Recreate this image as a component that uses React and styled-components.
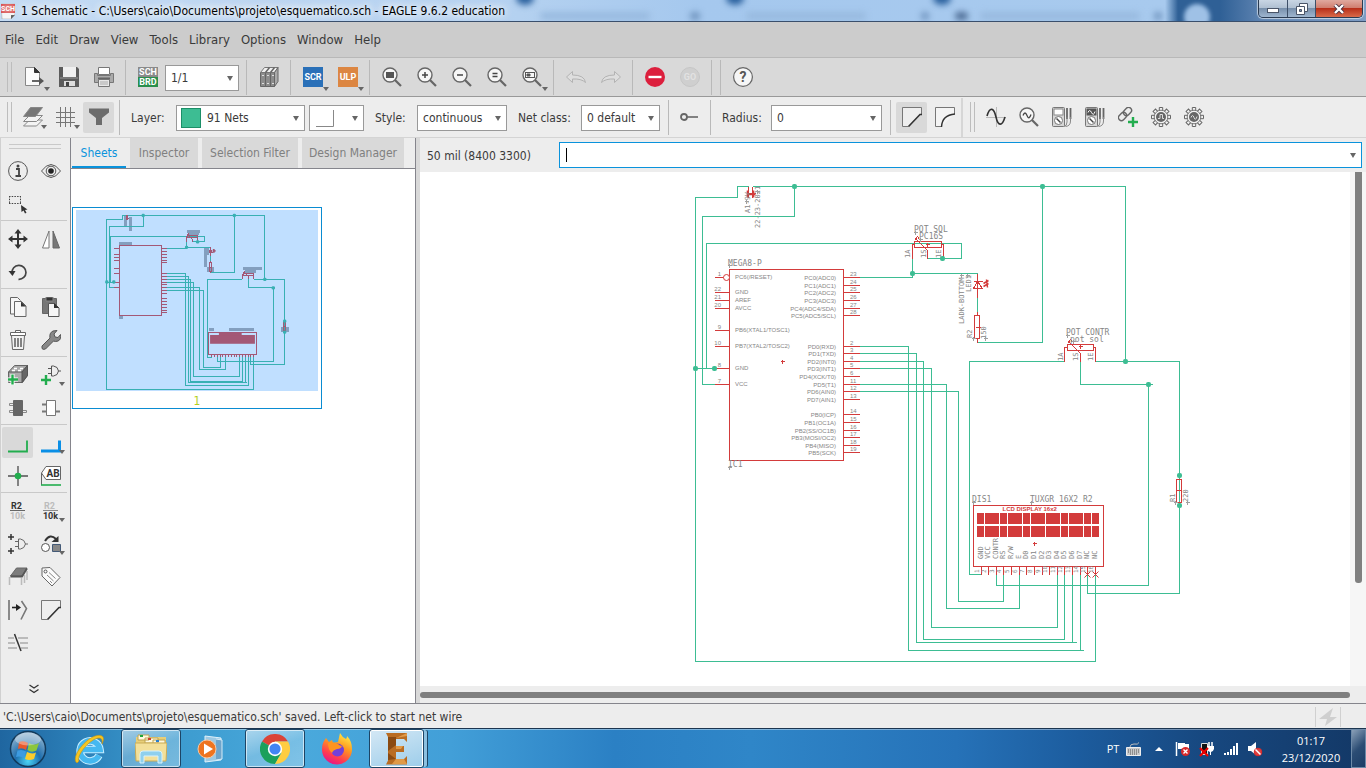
import React from "react";
import styled, { createGlobalStyle, css } from "styled-components";

const UI_FONT = '"DejaVu Sans Condensed", "DejaVu Sans", sans-serif';
const SHELL_FONT = '"Open Sans", "Noto Sans", sans-serif';

const GlobalStyle = createGlobalStyle`
  *, *::before, *::after { box-sizing: border-box; }
  html, body, #root { height: 100%; }
  body { margin: 0; overflow: hidden; }
  button, select, input { font: inherit; color: inherit; margin: 0; }
`;

/* ---------- window frame ---------- */

const Window = styled.div`
  display: flex;
  flex-direction: column;
  height: 100%;
  background: #ededed;
  color: #3a3a3a;
  font: 12px/16px ${UI_FONT};
`;

const TitleBar = styled.header`
  position: relative;
  flex: none;
  display: flex;
  justify-content: space-between;
  height: 22px;
  overflow: hidden;
  border-bottom: 1px solid #3a4f6c;
  background: linear-gradient(90deg, #c4dbf3 0, #b4d1f0 520px, #a5c8ee 700px, #a8caee 1165px, #2f6096 1178px, #2f6096 1220px, #5c82b0 1260px, #7d9cc4 100%);
`;

const GlassTab = styled.span`
  position: absolute;
  top: -9px;
  left: ${(p) => p.$x}px;
  width: 18px;
  height: 14px;
  border-radius: 50%;
  background: #2b619e;
  filter: blur(3px);
`;

const GlassSmudge = styled.span`
  position: absolute;
  top: 12px;
  left: ${(p) => p.$x}px;
  width: ${(p) => p.$w}px;
  height: 8px;
  border-radius: 4px;
  background: ${(p) => p.$tone};
  filter: blur(3px);
`;

const GlassCircle = styled.span`
  position: absolute;
  top: 4px;
  left: 1184px;
  width: 26px;
  height: 26px;
  border-radius: 50%;
  background: #9fc1e6;
  filter: blur(2px);
`;

const Title = styled.h1`
  position: relative;
  display: flex;
  align-items: center;
  gap: 6px;
  margin: 0;
  padding-left: 1px;
  color: #000;
  font: 12px/20px ${UI_FONT};
  white-space: nowrap;
  text-shadow: 0 0 6px #fff, 0 0 10px #fff, 0 0 12px #fff;
`;

const WindowButtons = styled.div`
  position: relative;
  display: flex;
  height: 18px;
  margin-right: 3px;
  border: 1px solid #2a3b52;
  border-top: 0;
  border-radius: 0 0 5px 5px;
  overflow: hidden;
  box-shadow: 0 0 1px 1px rgba(255, 255, 255, 0.6);
`;

const WindowButton = styled.button`
  display: flex;
  align-items: center;
  justify-content: center;
  width: ${(p) => (p.$close ? 47 : 28)}px;
  padding: 0;
  border: 0;
  border-left: ${(p) => (p.$first ? "0" : "1px solid #3d4f68")};
  background: ${(p) =>
    p.$close
      ? "linear-gradient(#e0a99f 0, #d07f70 45%, #b8301a 50%, #d96a4a 100%)"
      : "linear-gradient(#c9d6e4 0, #b0c0d2 45%, #7890ac 50%, #9fb6cf 100%)"};
`;

const MenuBar = styled.nav`
  flex: none;
  display: flex;
  align-items: center;
  gap: 11px;
  height: 36px;
  padding-left: 5px;
  background: #cccccc;
  border-bottom: 1px solid #b8b8b8;
`;

const MenuItem = styled.button`
  padding: 0;
  border: 0;
  background: none;
  font-size: 13px;
  line-height: 20px;
`;

/* ---------- toolbars ---------- */

const MainBar = styled.div`
  flex: none;
  display: flex;
  align-items: center;
  height: 39px;
  padding-left: 7px;
  background: #d9d9d9;
  border-bottom: 1px solid #999;
`;

const OptionBar = styled.div`
  flex: none;
  display: flex;
  align-items: center;
  height: 41px;
  padding-left: 7px;
  background: #ededed;
  border-bottom: 1px solid #d4d4d4;
`;

const Grip = styled.span`
  flex: none;
  width: 5px;
  height: 30px;
  margin-right: 4px;
  border: 1px solid #bdbdbd;
  border-width: 0 1px;
`;

const Separator = styled.span`
  flex: none;
  width: 1px;
  height: 35px;
  margin: 0 4px;
  background: #b9b9b9;
`;

const SectionEnd = styled.span`
  flex: none;
  width: 2px;
  height: 39px;
  margin-right: 7px;
  background: #d6d6d6;
`;

const Tool = styled.button`
  position: relative;
  flex: none;
  display: flex;
  align-items: center;
  justify-content: center;
  width: 35px;
  height: 35px;
  padding: 0;
  border: 0;
  border-radius: 2px;
  background: none;
  ${(p) =>
    p.$small &&
    css`
      width: 31px;
      height: 31px;
      margin: 0 1px;
    `}
  ${(p) => p.$active && "background: #d9d9d9;"}
`;

const DropMark = styled.span`
  position: absolute;
  right: 1px;
  bottom: 4px;
  border: 3px solid transparent;
  border-top: 4px solid #666;
  border-bottom: 0;
`;

const Label = styled.label`
  flex: none;
  width: ${(p) => p.$w}px;
  padding: 2px 0 0 7px;
  white-space: nowrap;
`;

const SelectBox = styled.span`
  position: relative;
  flex: none;
  display: flex;
  align-items: center;
  width: ${(p) => p.$w}px;
  height: 26px;
  margin: 2px ${(p) => p.$after || 4}px 0 0;
  border: 1px solid #999;
  background: #fff;
`;

const Select = styled.select`
  appearance: none;
  width: 100%;
  height: 24px;
  padding: 0 18px 0 ${(p) => p.$pad || 5}px;
  border: 0;
  border-radius: 0;
  outline: 0;
  background: none;
`;

const SelectArrow = styled.span`
  position: absolute;
  right: 5px;
  top: 10px;
  border: 3px solid transparent;
  border-top: 5px solid #666;
  border-bottom: 0;
  pointer-events: none;
`;

const Swatch = styled.span`
  position: absolute;
  left: 4px;
  top: 2px;
  width: 20px;
  height: 20px;
  border: 1px solid #1c8f68;
  background: #3dbd93;
  pointer-events: none;
`;

const BendSample = styled.svg`
  position: absolute;
  left: 6px;
  top: 3px;
  pointer-events: none;
`;

/* ---------- workspace ---------- */

const Workspace = styled.main`
  flex: 1;
  display: flex;
  min-height: 0;
  border-bottom: 1px solid #85858c;
`;

const Palette = styled.aside`
  flex: none;
  display: flex;
  flex-direction: column;
  width: 71px;
  padding: 6px 3px 5px 0;
  border-left: 1px solid #d0d0d0;
  border-right: 1px solid #85858c;
`;

const PaletteGrip = styled.span`
  flex: none;
  height: 5px;
  margin: 0 6px 5px 8px;
  border: 1px solid #c9c9c9;
  border-width: 1px 0;
`;

const PaletteGroup = styled.div`
  display: grid;
  grid-template-columns: 33px 33px;
  grid-auto-rows: 33px;
  align-items: center;
  border-bottom: ${(p) => (p.$last ? "0" : "1px solid #c9c9c9")};
  margin-bottom: 1px;
`;

const More = styled.button`
  align-self: center;
  display: flex;
  margin-top: auto;
  padding: 4px;
  border: 0;
  background: none;
`;

const SheetPanel = styled.section`
  flex: none;
  display: flex;
  flex-direction: column;
  width: 345px;
  border-right: 1px solid #85858c;
  background: #fff;
`;

const TabStrip = styled.div`
  flex: none;
  display: flex;
  gap: 4px;
  height: 31px;
  background: #ededed;
  border-bottom: 1px solid #85858c;
  padding: 0 0 0 1px;
`;

const Tab = styled.button`
  width: ${(p) => p.$w}px;
  height: 30px;
  padding: 2px 0 0;
  border: 0;
  border-bottom: 2px solid ${(p) => (p.$active ? "#0a93dc" : "#d9d9d9")};
  background: ${(p) => (p.$active ? "#ededed" : "#d9d9d9")};
  color: ${(p) => (p.$active ? "#0a93dc" : "#808080")};
  white-space: nowrap;
`;

const SheetCard = styled.figure`
  width: 250px;
  margin: 38px 0 0 1px;
  padding: 2px 3px 0;
  border: 1px solid #0a8cd2;
  text-align: center;
`;

const SheetPreview = styled.svg`
  display: block;
  width: 242px;
  height: 181px;
  background: #c0dfff;
`;

const SheetNumber = styled.figcaption`
  height: 17px;
  padding-top: 2px;
  color: #b4cf1e;
  font-size: 12px;
`;

const Splitter = styled.span`
  flex: none;
  width: 4px;
  background: #d9d9d9;
`;

const Editor = styled.section`
  flex: 1;
  display: flex;
  flex-direction: column;
  min-width: 0;
`;

const CommandRow = styled.div`
  flex: none;
  display: flex;
  align-items: center;
  height: 34px;
  padding: 0 4px 0 7px;
`;

const Coordinates = styled.label`
  flex: none;
  width: 132px;
  padding-top: 2px;
  white-space: nowrap;
`;

const CommandBox = styled.span`
  position: relative;
  flex: 1;
  display: flex;
  height: 26px;
  border: 1px solid #0a93dc;
  background: #fff;
`;

const CommandInput = styled.input`
  width: 100%;
  padding: 0 20px 0 6px;
  border: 0;
  outline: 0;
  background: none;
`;

const Caret = styled.span`
  position: absolute;
  left: 6px;
  top: 5px;
  width: 1px;
  height: 14px;
  background: #000;
`;

const CanvasRow = styled.div`
  flex: 1;
  display: flex;
  min-height: 0;
`;

const Canvas = styled.div`
  flex: 1;
  min-width: 0;
  overflow: hidden;
  background: #fff;
`;

const Drawing = styled.svg`
  display: block;
`;

const VerticalTrack = styled.div`
  flex: none;
  width: 16px;
  padding-left: 5px;
  background: #f6f6f6;
`;

const VerticalThumb = styled.div`
  width: 7px;
  height: 80%;
  border-radius: 0 0 3px 3px;
  background: #808080;
`;

const HorizontalTrack = styled.div`
  flex: none;
  height: 17px;
  padding: 6px 16px 0 0;
`;

const HorizontalThumb = styled.div`
  height: 6px;
  border-radius: 3px;
  background: #808080;
`;

const StatusBar = styled.footer`
  flex: none;
  display: flex;
  align-items: center;
  justify-content: space-between;
  height: 24px;
  padding: 2px 25px 0 3px;
`;

const StatusFlash = styled.span`
  display: flex;
  align-items: center;
  padding: 0 2px;
  border: 1px solid #d0d0d0;
  border-width: 0 1px;
`;

/* ---------- taskbar ---------- */

const Taskbar = styled.div`
  flex: none;
  display: flex;
  justify-content: space-between;
  height: 40px;
  border-top: 1px solid #1c3550;
  box-shadow: inset 0 1px 0 rgba(255, 255, 255, 0.4);
  background: linear-gradient(90deg, #1f66a0 0, #2a7cb5 5%, #3b9ace 12%, #4aa9dc 22%, #429fd8 33%, #2b80c4 45%, #2f86c8 55%, #2672b8 70%, #1c5c9e 79%, #174880 88%, #133866 100%);
`;

const Apps = styled.div`
  display: flex;
  align-items: center;
  padding-left: 7px;
`;

const AppButton = styled.button`
  display: flex;
  align-items: center;
  justify-content: center;
  width: ${(p) => p.$w}px;
  height: 39px;
  margin-right: ${(p) => p.$after || 0}px;
  padding: 0;
  border: 1px solid transparent;
  border-radius: 3px;
  background: none;
  ${(p) =>
    p.$open &&
    css`
      border-color: #1d4566;
      box-shadow: inset 0 0 0 1px rgba(255, 255, 255, 0.6);
      background: linear-gradient(160deg, rgba(255, 255, 255, 0.55), rgba(255, 255, 255, 0.25) 50%, rgba(255, 255, 255, 0.3));
    `}
  ${(p) =>
    p.$stacked &&
    css`
      background: linear-gradient(160deg, #d4e8f5, #9dcdea);
      box-shadow: inset 0 0 0 1px #fff, 4px 0 0 -1px #8cc0e0, 5px 0 0 -1px #1d4566;
    `}
`;

const Tray = styled.div`
  display: flex;
  align-items: center;
  color: #fff;
  font: 11px/17px ${SHELL_FONT};
`;

const TrayItem = styled.span`
  display: flex;
  justify-content: center;
  width: ${(p) => p.$w || 24}px;
`;

const Clock = styled.time`
  width: 80px;
  margin-left: 4px;
  text-align: center;
`;

const ShowDesktop = styled.button`
  width: 15px;
  height: 39px;
  padding: 0;
  border: 1px solid #6d8aa8;
  background: linear-gradient(135deg, #8aa0b8, #2c4d74 50%, #1b3c66);
`;

/* ---------- icons ---------- */

const Icon = ({ children, size = 20 }) => (
  <svg width={size} height={size} viewBox={`0 0 ${size} ${size}`} fill="none" stroke="#555" strokeWidth="1" aria-hidden="true">
    {children}
  </svg>
);

const Lens = ({ children }) => (
  <>
    <path d="M13 13l6 6" strokeWidth="2.2" stroke="#666" />
    <circle cx="8" cy="8" r="7" fill="#f6f6f6" stroke="#666" strokeWidth="1.4" />
    {children}
  </>
);

const Meter = ({ dark }) => (
  <>
    <rect x=".5" y=".5" width="12" height="19" rx="1" fill="#d6d6d6" stroke="#777" />
    <rect x="2" y="2" width="9" height="6" fill={dark ? "#555" : "#fff"} stroke={dark ? "#555" : "#888"} />
    {dark && <path d="M3 5.500q1.500-4 3.500 0t3.500-1" stroke="#fff" />}
    <circle cx="6.500" cy="13.500" r="4" fill="#fff" stroke="#777" />
    <path d="M4.500 11.500l4 4" stroke="#444" strokeWidth="1.400" />
    <path d="M15 1v11M18.500 1v11" strokeWidth="1.800" stroke="#666" />
    <path d="M15 10v5q0 4-3 4.500M18.500 10v4q0 5-5 5.500" stroke="#888" />
  </>
);

const GEAR_TEETH = [0, 45, 90, 135, 180, 225, 270, 315];

const Gear = ({ children }) => (
  <>
    {GEAR_TEETH.map((a) => (
      <path key={a} d="M8.300 4V.500h3.400V4" transform={`rotate(${a} 10 10)`} fill="#f2f2f2" stroke="#666" />
    ))}
    <circle cx="10" cy="10" r="6.800" fill="#f2f2f2" stroke="#777" />
    <circle cx="10" cy="10" r="5" fill="#666" stroke="none" />
    {children}
  </>
);

const BadgeText = (props) => (
  <text fontFamily="Roboto, sans-serif" fontWeight="700" fontSize="9" textAnchor="middle" stroke="none" {...props} />
);

const GLYPHS = {
  open: (
    <>
      <path d="M1.500.500h9l5 5v13h-14z" fill="#fbfbfb" stroke="#888" />
      <path d="M10.500.500v5h5z" fill="#333" stroke="#333" />
      <path d="M8 14h9" stroke="#555" strokeWidth="1.800" />
      <path d="M15 10l5 4-5 4z" fill="#555" stroke="none" />
    </>
  ),
  save: (
    <>
      <path d="M0 0h18l2 2v18H0z" fill="#5c5c5c" stroke="none" />
      <path d="M4 0h13v10H4z" fill="#f0f0f0" stroke="none" />
      <path d="M1 11h18" stroke="#999" />
      <path d="M5 14h11v5H5z" fill="#ddd" stroke="none" />
      <path d="M7 15h3v4H7z" fill="#444" stroke="none" />
    </>
  ),
  print: (
    <>
      <path d="M4.500.500h11v7h-11z" fill="#fff" stroke="#777" />
      <path d="M.500 6.500h3v2h13v-2h3v9H.500z" fill="#aaa" stroke="#777" />
      <path d="M4 11.500h12" stroke="#666" strokeWidth="2" />
      <path d="M4.500 12.500h11v7h-11z" fill="#e8e8e8" stroke="#777" />
      <path d="M6 15h8M6 17h8" stroke="#aaa" />
    </>
  ),
  schbrd: (
    <>
      <rect width="20" height="10" fill="#8a8a8a" stroke="none" />
      <rect y="10" width="20" height="10" fill="#2a8f4c" stroke="none" />
      <BadgeText x="10" y="8" fill="#fff">SCH</BadgeText>
      <BadgeText x="10" y="18" fill="#fff">BRD</BadgeText>
    </>
  ),
  books: (
    <>
      <path d="M1.500 5.500h5v14h-5zM6.500 5.500h5v14h-5zM11.500 5.500h4v14h-4z" fill="#8c8c8c" stroke="#666" />
      <path d="M1.500 5.500l4-5h13.500l-3.500 5z" fill="#f0f0f0" stroke="#777" />
      <path d="M6.500 5.500l4-5M11.500 5.500l4-5" stroke="#666" strokeWidth="1.500" />
      <path d="M15.500 5.500l3.500-5v14l-3.500 5z" fill="#aaa" stroke="#666" />
      <path d="M3 8.500h2M8 8.500h2M13 8.500h2M3 16.500h2M8 16.500h2M13 16.500h2" stroke="#ddd" />
    </>
  ),
  scr: (
    <>
      <rect width="20" height="20" fill="#2a70b8" stroke="none" />
      <BadgeText x="10" y="13">SCR</BadgeText>
    </>
  ),
  ulp: (
    <>
      <rect width="20" height="20" fill="#dc8642" stroke="none" />
      <BadgeText x="10" y="13">ULP</BadgeText>
    </>
  ),
  fit: <Lens><path d="M4 5h8v6H4z" fill="#555" stroke="none" /></Lens>,
  zoomin: <Lens><path d="M5 8h6M8 5v6" stroke="#444" strokeWidth="1.500" /></Lens>,
  zoomout: <Lens><path d="M5 8h6" stroke="#444" strokeWidth="1.500" /></Lens>,
  redraw: <Lens><path d="M5.500 6.500h5M5.500 9.500h5" stroke="#444" strokeWidth="1.300" /></Lens>,
  zoomsel: (
    <Lens>
      <rect x="3.500" y="5.500" width="9" height="5" stroke="#555" />
      <path d="M5 7h3v2H5z" fill="#555" stroke="#555" />
    </Lens>
  ),
  undo: <path d="M.500 10l6-5.500v3.500q12 0 13 7.500-4-4-13-3.500v3.500z" fill="#dedede" stroke="#b3b3b3" />,
  redo: <path d="M19.500 10l-6-5.500v3.500q-12 0-13 7.500 4-4 13-3.500v3.500z" fill="#dedede" stroke="#b3b3b3" />,
  stop: (
    <>
      <circle cx="10" cy="10" r="10" fill="#dc1f3d" stroke="none" />
      <path d="M3.500 10h13" stroke="#fff" strokeWidth="2.400" />
    </>
  ),
  go: (
    <>
      <circle cx="10" cy="10" r="9.500" fill="#cfcfcf" stroke="#c6c6c6" />
      <BadgeText x="10" y="13" fill="#e2e2e2">GO</BadgeText>
    </>
  ),
  help: (
    <>
      <circle cx="10" cy="10" r="9.400" fill="#f6f6f6" stroke="#666" strokeWidth="1.200" />
      <BadgeText x="10" y="15" fill="#555" fontSize="14">?</BadgeText>
    </>
  ),
  layers: (
    <>
      <path d="M.500 19l6-6h13l-6 6z" fill="#f4f4f4" stroke="#888" />
      <path d="M.500 14.500l6-6h13l-6 6z" fill="#f4f4f4" stroke="#888" />
      <path d="M.500 9.500l7-9h12l-7 9z" fill="#777" stroke="#888" />
    </>
  ),
  grid: <path d="M0 5.500h19M0 10.500h19M0 15.500h19M4.500 0v20M9.500 0v20M14.500 0v20" stroke="#777" />,
  filter: <path d="M0 1.500h20v4l-7 5.500v7h-6v-7L0 5.500z" fill="#6c6c6c" stroke="none" />,
  pin: (
    <>
      <circle cx="4" cy="10" r="3" stroke="#666" strokeWidth="1.800" />
      <path d="M7 10h11" stroke="#666" strokeWidth="1.600" />
    </>
  ),
  miter: (
    <>
      <path d="M19.500 7V.500H.500v19h6" stroke="#777" fill="#eee" />
      <path d="M6 20L14 11L16 7.500H20" stroke="none" />
      <path d="M6.500 19.500L18 7.500h2" stroke="#333" strokeWidth="1.600" />
    </>
  ),
  arc: (
    <>
      <path d="M19.500 7V.500H.500v19h6" stroke="#777" fill="#f4f4f4" />
      <path d="M6.500 20Q7 8 20 7" stroke="#333" strokeWidth="1.400" />
    </>
  ),
  sine: (
    <>
      <path d="M0 10.500h20M10.500 0v20" stroke="#bbb" />
      <path d="M1 9C4-1 8 1 10 10s6 10 9 0" stroke="#333" strokeWidth="1.600" />
    </>
  ),
  probe: <Lens><path d="M4 8.500q2-5 4 0t4-1" stroke="#444" strokeWidth="1.300" /></Lens>,
  meter: <Meter />,
  scope: <Meter dark />,
  link: (
    <>
      <g transform="rotate(-45 7 7)" stroke="#666" strokeWidth="1.400">
        <rect x="-1" y="4" width="9" height="6" rx="3" />
        <rect x="6" y="4" width="9" height="6" rx="3" />
      </g>
      <path d="M15 10v10M10 15h10" stroke="#22ad4e" strokeWidth="2.400" />
    </>
  ),
  gearstep: <Gear><path d="M7 11.500h2v-4h2.500v4H13" stroke="#ddd" /></Gear>,
  gearwave: <Gear><path d="M7 10.500q1.500-4 3 0t3-1" stroke="#ddd" /></Gear>,
  info: (
    <>
      <circle cx="10" cy="10" r="9.400" stroke="#555" />
      <path d="M8 8h3v7M7.500 15h5.500" stroke="#444" strokeWidth="1.800" />
      <circle cx="10" cy="5" r="1.500" fill="#444" stroke="none" />
    </>
  ),
  eye: (
    <>
      <path d="M.500 10Q10-3 19.500 10 10 23 .500 10z" stroke="#555" />
      <circle cx="10" cy="10" r="4.800" stroke="#555" />
      <circle cx="10" cy="10" r="2.800" fill="#222" stroke="none" />
    </>
  ),
  group: (
    <>
      <path d="M1 2.500h12M1 9.500h12M1.500 2v8M12.500 2v8" stroke="#444" strokeDasharray="1.500 1.200" />
      <path d="M13 11l.500 7 2-1.500 1.500 3 1.500-.700-1.500-2.800 2.500-.500z" fill="#333" stroke="none" />
    </>
  ),
  move: (
    <>
      <path d="M10 3v14M3 10h14" stroke="#333" strokeWidth="2" />
      <path d="M10 0l3.500 4.500h-7zM10 20l3.500-4.500h-7zM0 10l4.500-3.500v7zM20 10l-4.500-3.500v7z" fill="#333" stroke="none" />
    </>
  ),
  mirror: (
    <>
      <path d="M8 2v17H1.500z" fill="#fff" stroke="#777" />
      <path d="M12 2v17h6.500z" fill="#777" stroke="#666" />
    </>
  ),
  rotate: (
    <>
      <path d="M4 11a7 7 0 1 1 6.500 6.300" stroke="#444" strokeWidth="1.700" />
      <path d="M.500 9h7l-3 5z" fill="#333" stroke="none" />
    </>
  ),
  copy: (
    <>
      <path d="M10.500 17H2.500V.500h7l3 3" fill="#f6f6f6" stroke="#666" />
      <path d="M6.500 4.500h7l4.500 4.500v10.500H6.500z" fill="#f6f6f6" stroke="#666" />
      <path d="M13 4.500v5h5z" fill="#333" stroke="none" />
    </>
  ),
  paste: (
    <>
      <path d="M1.500 1.500h14v15h-14z" fill="#777" stroke="#666" />
      <path d="M5 0h7v4H5z" fill="#333" stroke="#888" />
      <path d="M7.500 6.500h6l4.500 4.500v8.500H7.500z" fill="#f6f6f6" stroke="#555" />
      <path d="M13 6v5h5z" fill="#333" stroke="none" />
    </>
  ),
  trash: (
    <>
      <path d="M3.500 5.500h13l-1 14h-11z" fill="#f2f2f2" stroke="#666" />
      <path d="M2.500 2.500h15v3h-15zM7.500 2.500v-2h5v2" fill="#fff" stroke="#666" />
      <path d="M7 8v9M10 8v9M13 8v9" stroke="#666" strokeWidth="1.600" />
    </>
  ),
  wrench: (
    <path d="M1 16l8-8q-1-5 3-7l4-.500-3 3.500 1 3 3 .500 2.500-3q1 5-2.500 6.500-2.500 1-4.500 0L4.500 19Q2 20 1 18.500z" fill="#888" stroke="#555" />
  ),
  addpart: (
    <>
      <path d="M.500 7l6-6.500h13v10l-5 7H.500z" fill="#aaa" stroke="#666" />
      <path d="M.500 7h13.500l5.500-6.500" stroke="#555" />
      <path d="M14 7v10.500l5.500-7V.500z" fill="#666" stroke="#555" />
      <path d="M6 3.500h3M12 3.500h3M4 5.500h3M10 5.500h3" stroke="#fff" strokeWidth="1.500" />
      <path d="M4.500 9v11M-1 14.500h11" stroke="#fff" strokeWidth="4" />
      <path d="M4.500 9.500v10M0 14.500h10" stroke="#22ad4e" strokeWidth="2.400" />
    </>
  ),
  addgate: (
    <>
      <path d="M10.500 1h2q4.500.500 5 5-.500 4.500-5 5h-2zM7 3.500h3.500M7 8.500h3.500M17.500 6H20" stroke="#555" />
      <path d="M5 10v10M0 15h10" stroke="#22ad4e" strokeWidth="2.400" />
    </>
  ),
  gateswap: (
    <>
      <path d="M1.500 5.500h4v2h-4zM1.500 12.500h4v2h-4zM14.500 12.500h4v2h-4z" stroke="#888" />
      <path d="M5.500 2.500h9v15h-9z" fill="#666" stroke="#666" />
    </>
  ),
  pinswap: (
    <>
      <path d="M5.500 2.500h9v15h-9z" fill="#fff" stroke="#777" />
      <path d="M1 6.500h4M1 13.500h4M15 13.500h4" stroke="#777" strokeWidth="2" />
    </>
  ),
  net: <path d="M0 18.500h19V7.500" stroke="#22ad4e" strokeWidth="1.800" />,
  bus: <path d="M0 18h18.500V7.500" stroke="#0a8fe6" strokeWidth="3" />,
  junction: (
    <>
      <path d="M10 0v20M0 10h20" stroke="#777" strokeWidth="1.800" />
      <circle cx="10" cy="10" r="3.300" fill="#22ad4e" stroke="none" />
    </>
  ),
  netlabel: (
    <>
      <path d="M.500 19V7L5 .500h14.500v13H5L.500 7" fill="#fff" stroke="#666" />
      <path d="M0 19h20" stroke="#22ad4e" strokeWidth="1.600" />
      <BadgeText x="12" y="11" fill="#333" fontSize="10">AB</BadgeText>
    </>
  ),
  name: (
    <>
      <BadgeText x="8.500" y="8" fill="#333">R2</BadgeText>
      <path d="M2 9.500h15" stroke="#666" />
      <BadgeText x="9.500" y="18" fill="#bcbcbc">10k</BadgeText>
    </>
  ),
  value: (
    <>
      <BadgeText x="8.500" y="8" fill="#bcbcbc">R2</BadgeText>
      <path d="M2 9.500h15" stroke="#888" />
      <BadgeText x="9.500" y="18" fill="#333">10k</BadgeText>
    </>
  ),
  invoke: (
    <>
      <path d="M10.500 5h2q4 .500 5 5-1 4.500-5 5h-2zM7 7.500h3.500M7 12.500h3.500M17.500 10H20" stroke="#666" />
      <path d="M3 0v6M0 3h6M3 14v6M0 17h6" stroke="#333" strokeWidth="1.500" />
    </>
  ),
  replace: (
    <>
      <circle cx="4.500" cy="13.500" r="4" fill="#fff" stroke="#555" />
      <path d="M11.500 10.500h8v7h-8z" fill="#888" stroke="#445a77" />
      <path d="M4 7q5-8 11-2" stroke="#333" strokeWidth="2" />
      <path d="M17.500 2v6h-7z" fill="#333" stroke="none" />
    </>
  ),
  package: (
    <>
      <path d="M1.500 10v8M13.500 11v7M16.500 8v8M19 4v9" stroke="#bbb" strokeWidth="1.500" />
      <path d="M2.500 9l6-8h10.500l-5 8z" fill="#7c7c7c" stroke="#666" />
      <path d="M2.500 9.500h11.500l5-8" stroke="#555" strokeWidth="1.800" />
    </>
  ),
  attribute: (
    <>
      <path d="M1 1l8-.500L19 10.500 11 19 1 9z" fill="#fbfbfb" stroke="#666" />
      <circle cx="4.500" cy="4.500" r="1.500" stroke="#555" />
      <path d="M8 5.500l6.500 6M6 8l6.500 6M9 14l2 2" stroke="#888" />
    </>
  ),
  split: (
    <>
      <path d="M1 0v20" stroke="#777" strokeWidth="1.700" />
      <path d="M13.500 1l5 7.500-5.500 11" stroke="#777" strokeWidth="1.600" />
      <path d="M4 7.500h5" stroke="#222" strokeWidth="1.600" />
      <path d="M8 4l5 3.500-5 3.500z" fill="#222" stroke="none" />
    </>
  ),
  optimize: (
    <>
      <path d="M0 5h6M10 5h10M0 10h7M12 10h8M0 15h9M13 15h7" stroke="#aaa" strokeWidth="1.700" />
      <path d="M6.500 1l6.500 17" stroke="#333" strokeWidth="1.500" />
    </>
  ),
};

const ToolButton = ({ icon, name, small, active, drop }) => (
  <Tool type="button" aria-label={name} $small={small} $active={active}>
    <Icon>{GLYPHS[icon]}</Icon>
    {drop && <DropMark />}
  </Tool>
);

const ComboBox = ({ id, width, after, pad, value, children, label }) => (
  <SelectBox $w={width} $after={after}>
    {children}
    <Select id={id} $pad={pad} aria-label={label} defaultValue={value}>
      <option value={value}>{value}</option>
    </Select>
    <SelectArrow />
  </SelectBox>
);

/* ---------- schematic ---------- */

const WIRES = [
  "M748 186H737V197H695V661H1095V574",
  "M752 186H1125V361",
  "M794 186V216H702V384H714",
  "M706 368V243H961V258H927",
  "M695 368H714",
  "M859 277H912V258",
  "M912 273H977",
  "M977 297V311",
  "M977 342H1042V186",
  "M859 346H908V650H1083M1080 574V650",
  "M859 353H916V642H1076M1072 574V642",
  "M859 361H923V639H1064V574",
  "M859 368H931V627H1057V574",
  "M859 384H946V608H1019V574",
  "M859 391H958V601H1003V574",
  "M1064 361H969V574H981",
  "M1080 361V384H1152M1148 384V585H996V574",
  "M1095 361H1179V593H1087V574",
];

const JUNCTIONS = [
  [794, 186], [1042, 186], [695, 368], [714, 368], [912, 273],
  [942, 258], [1125, 361], [1148, 384], [1179, 475], [1179, 505],
];

const LEFT_PINS = [
  [277, "1", "PC6(/RESET)"], [292, "22", "GND"], [300, "21", "AREF"], [308, "20", "AVCC"],
  [330, "9", "PB6(XTAL1/TOSC1)"], [346, "10", "PB7(XTAL2/TOSC2)"], [368, "8", "GND"], [384, "7", "VCC"],
];

const RIGHT_PINS = [
  [277, "23", "PC0(ADC0)"], [285, "24", "PC1(ADC1)"], [292, "25", "PC2(ADC2)"], [300, "26", "PC3(ADC3)"],
  [308, "27", "PC4(ADC4/SDA)"], [315, "28", "PC5(ADC5/SCL)"], [346, "2", "PD0(RXD)"], [353, "3", "PD1(TXD)"],
  [361, "4", "PD2(INT0)"], [368, "5", "PD3(INT1)"], [376, "6", "PD4(XCK/T0)"], [384, "11", "PD5(T1)"],
  [391, "12", "PD6(AIN0)"], [399, "13", "PD7(AIN1)"], [414, "14", "PB0(ICP)"], [422, "15", "PB1(OC1A)"],
  [430, "16", "PB2(SS/OC1B)"], [437, "17", "PB3(MOSI/OC2)"], [445, "18", "PB4(MISO)"], [452, "19", "PB5(SCK)"],
];

const LCD_PINS = [
  [981, "GND"], [988, "VCC"], [996, "CONTR"], [1003, "RS"], [1011, "R/W"], [1019, "E"], [1026, "D0"], [1034, "D1"],
  [1042, "D2"], [1049, "D3"], [1057, "D4"], [1064, "D5"], [1072, "D6"], [1080, "D7"], [1087, "NC"], [1095, "NC"],
];

const LCD_CELLS = [
  [977, 7], [985, 14], [1000, 7], [1008, 14], [1023, 7], [1031, 14],
  [1046, 14], [1061, 7], [1069, 14], [1084, 7], [1092, 7],
];

const plus = (x, y, r = 2) => `M${x - r} ${y}H${x + r}M${x} ${y - r}V${y + r}`;

const PARTS = [
  "M729 269H843V460H729Z",
  ...LEFT_PINS.map(([y]) => `M714 ${y}H729`),
  ...RIGHT_PINS.map(([y]) => `M843 ${y}H859`),
  "M748 186V197M752 186V197M746 193H755",
  "M914 241H941V247H914ZM914 244H912V258M941 244H943V258M927 258V250L915 238M914 240L917 236L919 239",
  "M1067 344H1093V350H1067ZM1067 347H1064V361M1093 347H1095V361M1080 361V353L1068 341M1067 343L1070 339L1072 342",
  "M977 273V297M973 281H982M977 281L973 288H982Z",
  "M977 311V315M974 315H979V338H974ZM977 338V342M975 327H980",
  "M1176 479H1181V502H1176ZM1176 490H1181",
  "M973 505H1103V566H973Z",
  ...LCD_PINS.map(([x]) => `M${x} 566V574`),
];

const ORIGINS = [[782, 361], [1080, 346], [927, 244], [1034, 543]];

const Wiring = ({ wire, part, dot }) => (
  <>
    <g fill="none" stroke={wire} shapeRendering="crispEdges">
      {WIRES.map((d) => <path key={d} d={d} vectorEffect="non-scaling-stroke" />)}
    </g>
    <g fill="none" stroke={part} shapeRendering="crispEdges">
      {PARTS.map((d) => <path key={d} d={d} vectorEffect="non-scaling-stroke" />)}
    </g>
    {JUNCTIONS.map(([x, y]) => (
      <rect key={`${x}-${y}`} x={x - dot} y={y - dot} width={dot * 2} height={dot * 2} rx={dot * 0.8} fill={wire} />
    ))}
  </>
);

const SmallText = ({ x, y, children, end }) => (
  <text x={x} y={y} fontFamily="Liberation Sans, sans-serif" fontSize="6" textAnchor={end ? "end" : "start"}>{children}</text>
);

const PartText = ({ x, y, children }) => (
  <text x={x} y={y} fontFamily="DejaVu Sans Mono, monospace" fontSize="8">{children}</text>
);

const UpText = ({ x, y, children, size = 7 }) => (
  <text transform={`translate(${x} ${y}) rotate(-90)`} fontFamily="DejaVu Sans Mono, monospace" fontSize={size}>{children}</text>
);

const TEXT_ORIGINS = [
  [729, 265], [729, 467], [915, 232], [920, 239], [1067, 335], [1073, 341], [973, 502], [1031, 502],
  [973, 338], [985, 338], [1175, 502], [1187, 502], [746, 201], [757, 191], [961, 275], [967, 275],
];

const Schematic = () => (
  <Drawing width="930" height="514" viewBox="420 172 930 514" role="img" aria-label="Schematic">
    <g transform="translate(.5 .5)">
      <Wiring wire="#3dbd93" part="#d33b3b" dot={2.5} />
      <g fill="none" stroke="#d33b3b">
        <path d={ORIGINS.map(([x, y]) => plus(x, y)).join("")} shapeRendering="crispEdges" />
        <circle cx="726" cy="277" r="3" fill="#fff" />
        <path d="M983 283l5-3M983 286l5-3M986 279l1 8" strokeWidth="1.5" />
        <path d="M1084 571l6 6M1084 577l6-6M1092 571l6 6M1092 577l6-6" />
        <path d="M747 190v7M753 190v7M747 194h8" strokeWidth="1.600" />
      </g>
      <g fill="#d33b3b">
        {LCD_CELLS.map(([x, w]) => (
          <React.Fragment key={x}>
            <rect x={x - 0.5} y="512.5" width={w} height="11" />
            <rect x={x - 0.5} y="525.5" width={w} height="11" />
          </React.Fragment>
        ))}
        <text x="1002" y="510" fontFamily="Liberation Sans, sans-serif" fontWeight="700" fontSize="6">LCD DISPLAY 16x2</text>
      </g>
      <g fill="#868686" transform="translate(-.5 -.5)">
        {LEFT_PINS.map(([y, n, label]) => (
          <React.Fragment key={y}>
            <SmallText x={721} y={y - 1} end>{n}</SmallText>
            <SmallText x={735} y={y + 2}>{label}</SmallText>
          </React.Fragment>
        ))}
        {RIGHT_PINS.map(([y, n, label]) => (
          <React.Fragment key={y}>
            <SmallText x={850} y={y - 1}>{n}</SmallText>
            <SmallText x={836} y={y + 3} end>{label}</SmallText>
          </React.Fragment>
        ))}
        {LCD_PINS.map(([x, label], i) => (
          <React.Fragment key={x}>
            <UpText x={x + 2} y={559}>{label}</UpText>
            <UpText x={x - 2} y={573} size={6}>{i + 1}</UpText>
          </React.Fragment>
        ))}
        <PartText x={728} y={266}>MEGA8-P</PartText>
        <PartText x={728} y={467}>IC1</PartText>
        <PartText x={914} y={232}>POT SOL</PartText>
        <PartText x={919} y={239}>PC16S</PartText>
        <PartText x={1066} y={335}>POT CONTR</PartText>
        <PartText x={1070} y={342}>pot sol</PartText>
        <PartText x={972} y={502}>DIS1</PartText>
        <PartText x={1030} y={502}>TUXGR 16X2 R2</PartText>
        <UpText x={910} y={258}>1A</UpText>
        <UpText x={926} y={258}>1S</UpText>
        <UpText x={941} y={258}>1E</UpText>
        <UpText x={1063} y={361}>1A</UpText>
        <UpText x={1078} y={361}>1S</UpText>
        <UpText x={1093} y={361}>1E</UpText>
        <UpText x={750} y={213}>A1-9V</UpText>
        <UpText x={760} y={228}>22-23-2021</UpText>
        <UpText x={964} y={324}>LADK-BOTTOM</UpText>
        <UpText x={971} y={292}>LED1</UpText>
        <UpText x={972} y={338}>R2</UpText>
        <UpText x={986} y={339}>150</UpText>
        <UpText x={1175} y={502}>R1</UpText>
        <UpText x={1188} y={502}>220</UpText>
      </g>
      <path d={TEXT_ORIGINS.map(([x, y]) => plus(x, y)).join("")} fill="none" stroke="#a0a0a0" shapeRendering="crispEdges" />
    </g>
  </Drawing>
);

const TEXT_MARKS = [
  [728, 259, 36, 8], [728, 461, 12, 8], [742, 186, 8, 30], [755, 190, 8, 38], [914, 225, 34, 8], [919, 233, 26, 6],
  [959, 274, 9, 53], [966, 274, 6, 20], [968, 327, 20, 14], [1065, 328, 52, 8], [1072, 336, 28, 8],
  [972, 495, 16, 8], [1028, 495, 68, 8], [1170, 490, 22, 14],
];

const SheetThumbnail = () => (
  <SheetPreview viewBox="76 210 242 181" role="img" aria-label="Sheet 1 preview">
    <g transform="translate(-148.600 147.500) scale(.3675 .3655)">
      {TEXT_MARKS.map(([x, y, w, h]) => (
        <rect key={`${x}-${y}`} x={x} y={y} width={w} height={h} fill="#839fbf" shapeRendering="crispEdges" />
      ))}
      <Wiring wire="#38b0b3" part="#a35876" dot={4.5} />
      <rect x="976" y="513" width="122" height="24" fill="#a35876" />
      <rect x="1000" y="506" width="62" height="8" fill="#a35876" />
      <path d="M986 278v10M983 283h8" stroke="#a35876" strokeWidth="5" />
    </g>
  </SheetPreview>
);

/* ---------- taskbar artwork ---------- */

const StartOrb = () => (
  <svg width="38" height="38" viewBox="0 0 38 38" aria-hidden="true">
    <defs>
      <radialGradient id="orb" cx=".5" cy=".85" r=".8">
        <stop offset="0" stopColor="#4ad3f5" /><stop offset=".45" stopColor="#1f6fae" /><stop offset="1" stopColor="#8fb3cf" />
      </radialGradient>
    </defs>
    <circle cx="19" cy="19" r="17.500" fill="url(#orb)" stroke="#123a5c" strokeWidth="1.500" />
    <path d="M10 12q5-2 9 1l-2 7q-4-3-8-1z" fill="#e8592b" />
    <path d="M20 13q5 3 10 0l-2.500 7.500q-5 2.500-9-.500z" fill="#8cc63e" />
    <path d="M8.500 20.500q5-1.500 8.500 1L15 28q-4-2.500-8-1z" fill="#3d9be0" />
    <path d="M18 22q5 2.500 9 .500L25 29q-5 2-9 0z" fill="#fbcc2c" />
    <ellipse cx="19" cy="9" rx="13" ry="6.500" fill="#fff" opacity=".35" />
  </svg>
);

const Explorer = () => (
  <svg width="32" height="30" viewBox="0 0 32 30" aria-hidden="true">
    <path d="M1 3h30v24H1z" fill="#e8cf78" />
    <path d="M3 1h11v5H3zM10 4h13v5H10zM18 6h12v5H18z" fill="#fff9df" stroke="#bfa453" />
    <path d="M5 1h3v2H5z" fill="#1ea63a" /><path d="M13 4h3v2h-3z" fill="#d23b2b" /><path d="M21 6h3v2h-3z" fill="#2a7fd0" />
    <path d="M0 9h32l-1 18H1z" fill="#f3e09a" stroke="#c9ab56" />
    <path d="M5 29V20q0-3 3-3h16q3 0 3 3v9h-4v-7H9v7z" fill="#8fd0ee" stroke="#d8f2fc" />
  </svg>
);

const InternetExplorer = () => (
  <svg width="32" height="32" viewBox="0 0 32 32" aria-hidden="true">
    <path d="M26 22.500A10 10 0 1 1 27 16.500H9" fill="none" stroke="#c5edff" strokeWidth="7.500" />
    <path d="M26 22.500A10 10 0 1 1 27 16.500H9" fill="none" stroke="#45b8f0" strokeWidth="5.500" />
    <path d="M4 30C-4 24 18-2 29 3q3 2 0 8 1-6-3-6C18 5 3 22 6 28z" fill="#f5c622" stroke="#c79410" strokeWidth=".6" />
  </svg>
);

const MediaPlayer = () => (
  <svg width="28" height="28" viewBox="0 0 28 28" aria-hidden="true">
    <path d="M8 1l16 2v22L8 27z" fill="#9cc9e4" stroke="#e0f2fb" />
    <path d="M19 4l6 1v19l-6 1" fill="#6da5cc" stroke="#d5ecf8" />
    <circle cx="10" cy="14" r="9" fill="#ee7420" stroke="#f9c7a0" />
    <path d="M7 8.500l9 5.500-9 5.500z" fill="#fff" />
  </svg>
);

const Chrome = () => (
  <svg width="30" height="30" viewBox="0 0 30 30" aria-hidden="true">
    <path d="M15 15L2 7.500A15 15 0 0 1 28 7.500H15z" fill="#db4437" />
    <path d="M15 15L2 7.500A15 15 0 0 0 15 30l6.500-11.300z" fill="#1ba05c" />
    <path d="M15 15l6.500 3.700L15 30A15 15 0 0 0 28 7.500H15z" fill="#ffcd42" />
    <circle cx="15" cy="15" r="7.200" fill="#fff" /><circle cx="15" cy="15" r="5.600" fill="#4285f4" />
  </svg>
);

const Firefox = () => (
  <svg width="32" height="32" viewBox="0 0 32 32" aria-hidden="true">
    <defs>
      <linearGradient id="fox" x1=".8" y1="0" x2=".3" y2="1">
        <stop offset="0" stopColor="#fff04a" /><stop offset=".4" stopColor="#ff9a1f" /><stop offset=".75" stopColor="#ff3b50" /><stop offset="1" stopColor="#e3158c" />
      </linearGradient>
    </defs>
    <path d="M3 8l2-3 3 4 3-2 1 3 5-1 2-9q2 4 6 6 1-1 1-3 5 5 5 13a15 15 0 0 1-30 1Q1 11 3 8z" fill="url(#fox)" />
    <circle cx="16.500" cy="17" r="6.500" fill="#7340d8" />
    <path d="M7 10q6-2 10 1 2 2 4 2-1 3-5 3-4 1-5 4-4-3-4-10z" fill="#ff9420" />
  </svg>
);

const Eagle = () => (
  <svg width="22" height="32" viewBox="0 0 22 32" aria-hidden="true">
    <path d="M0 0h21v9l-3-3H10v7h8v6H10v7h8l3-3v8.500H0l2-4V4z" fill="#b96c22" />
    <path d="M2 4h8v8L2 18zM10 26l-8 1v-7z" fill="#8a4a12" />
    <path d="M10 5l11-5v3zM10 13h7l-2 3h-5zM10 26h8l3 5H6z" fill="#e09a48" />
  </svg>
);

/* ---------- page ---------- */

const MENU = ["File", "Edit", "Draw", "View", "Tools", "Library", "Options", "Window", "Help"];

const PALETTE = [
  [["info", "Info"], ["eye", "Show"], ["group", "Group"]],
  [["move", "Move"], ["mirror", "Mirror"], ["rotate", "Rotate"]],
  [["copy", "Copy"], ["paste", "Paste"], ["trash", "Delete"], ["wrench", "Change"]],
  [["addpart", "Add part"], ["addgate", "Add gate", { drop: true }], ["gateswap", "Gate swap"], ["pinswap", "Pin swap"]],
  [["net", "Net", { active: true }], ["bus", "Bus", { drop: true }], ["junction", "Junction"], ["netlabel", "Label"]],
  [
    ["name", "Name"], ["value", "Value", { drop: true }], ["invoke", "Invoke"], ["replace", "Replace", { drop: true }],
    ["package", "Package"], ["attribute", "Attribute"], ["split", "Split"], ["miter", "Miter"], ["optimize", "Optimize"],
  ],
];

export default function App() {
  return (
    <Window>
      <GlobalStyle />
      <TitleBar>
        <GlassTab $x={516} /><GlassTab $x={726} /><GlassTab $x={933} />
        <GlassSmudge $x={540} $w={110} $tone="#98badf" /><GlassSmudge $x={690} $w={10} $tone="#6f93bd" />
        <GlassSmudge $x={746} $w={120} $tone="#98badf" /><GlassSmudge $x={921} $w={8} $tone="#6f93bd" />
        <GlassSmudge $x={955} $w={13} $tone="#4d6c94" /><GlassSmudge $x={980} $w={160} $tone="#98badf" />
        <GlassSmudge $x={1154} $w={8} $tone="#6f93bd" />
        <GlassCircle />
        <Title>
          <svg width="14" height="16" viewBox="0 0 14 16" aria-hidden="true">
            <path d="M0 1h14v10l-4 5H1z" fill="#f5f5f5" stroke="#999" strokeWidth=".5" />
            <path d="M0 1h14v9H0z" fill="#d32b2b" />
            <path d="M10 16v-4h4z" fill="#555" />
            <text x="7" y="8" fill="#fff" fontFamily="Roboto, sans-serif" fontSize="7" fontWeight="700" textAnchor="middle">SCH</text>
          </svg>
          1 Schematic - C:\Users\caio\Documents\projeto\esquematico.sch - EAGLE 9.6.2 education
        </Title>
        <WindowButtons>
          <WindowButton type="button" aria-label="Minimize" $first>
            <svg width="12" height="12"><rect x=".5" y="5.500" width="11" height="4" fill="#fff" stroke="#4a5568" /></svg>
          </WindowButton>
          <WindowButton type="button" aria-label="Restore">
            <svg width="12" height="12" fill="#fff" stroke="#4a5568">
              <path d="M3.500.500h8v8h-8z" /><path d="M.500 3.500h8v8h-8z" /><path d="M3.500 6.500h2v2h-2z" fill="#7890ac" />
            </svg>
          </WindowButton>
          <WindowButton type="button" aria-label="Close" $close>
            <svg width="12" height="10"><path d="M2 1l8 8M10 1L2 9" stroke="#4a3040" strokeWidth="4" /><path d="M2 1l8 8M10 1L2 9" stroke="#fff" strokeWidth="2.400" /></svg>
          </WindowButton>
        </WindowButtons>
      </TitleBar>

      <MenuBar>{MENU.map((m) => <MenuItem type="button" key={m}>{m}</MenuItem>)}</MenuBar>

      <MainBar>
        <Grip />
        <ToolButton icon="open" name="Open" drop />
        <ToolButton icon="save" name="Save" />
        <ToolButton icon="print" name="Print" />
        <Separator />
        <ToolButton icon="schbrd" name="Board" />
        <ComboBox label="Sheet" value="1/1" width={74} after={3} />
        <Separator />
        <ToolButton icon="books" name="Libraries" />
        <Separator />
        <ScriptTools>
          <ToolButton icon="scr" name="Script" drop />
          <ToolButton icon="ulp" name="Run ULP" drop />
        </ScriptTools>
        <Separator />
        <ToolButton icon="fit" name="Fit" />
        <ToolButton icon="zoomin" name="Zoom in" />
        <ToolButton icon="zoomout" name="Zoom out" />
        <ToolButton icon="redraw" name="Redraw" />
        <ToolButton icon="zoomsel" name="Zoom to selection" drop />
        <Separator />
        <ToolButton icon="undo" name="Undo" />
        <ToolButton icon="redo" name="Redo" />
        <Separator />
        <ToolButton icon="stop" name="Stop" />
        <ToolButton icon="go" name="Go" />
        <Separator />
        <Separator />
        <ToolButton icon="help" name="Help" />
      </MainBar>

      <OptionBar>
        <Grip />
        <ToolButton icon="layers" name="Layers" small drop />
        <ToolButton icon="grid" name="Grid" small drop />
        <ToolButton icon="filter" name="Filter" small active />
        <Separator />
        <Label htmlFor="layer" $w={52}>Layer:</Label>
        <ComboBox id="layer" value="91 Nets" width={129} pad={30}><Swatch /></ComboBox>
        <ComboBox label="Wire bend" value="" width={55}>
          <BendSample width="20" height="20"><path d="M0 17.500h17.500V1" fill="none" stroke="#888" /></BendSample>
        </ComboBox>
        <Label htmlFor="style" $w={49}>Style:</Label>
        <ComboBox id="style" value="continuous" width={90} />
        <Label htmlFor="netclass" $w={70}>Net class:</Label>
        <ComboBox id="netclass" value="0 default" width={79} />
        <Separator />
        <ToolButton icon="pin" name="Pin" small />
        <Separator />
        <Label htmlFor="radius" $w={56}>Radius:</Label>
        <ComboBox id="radius" value="0" width={111} />
        <Separator />
        <ToolButton icon="miter" name="Straight miter" small active />
        <ToolButton icon="arc" name="Round miter" small />
        <SectionEnd />
        <Grip />
        <ToolButton icon="sine" name="Simulate" small />
        <ToolButton icon="probe" name="Probe" small />
        <ToolButton icon="meter" name="Voltage" small />
        <ToolButton icon="scope" name="Scope" small />
        <ToolButton icon="link" name="Add model" small />
        <ToolButton icon="gearstep" name="Digital setup" small />
        <ToolButton icon="gearwave" name="Source setup" small />
      </OptionBar>

      <Workspace>
        <Palette>
          <PaletteGrip />
          {PALETTE.map((group, i) => (
            <PaletteGroup key={i} $last={i === PALETTE.length - 1}>
              {group.map(([icon, name, extra]) => <ToolButton key={icon} icon={icon} name={name} small {...extra} />)}
            </PaletteGroup>
          ))}
          <More type="button" aria-label="More tools">
            <svg width="10" height="10" fill="none" stroke="#333" strokeWidth="1.300"><path d="M.500 1l4.500 3 4.500-3M.500 5.500l4.500 3 4.500-3" /></svg>
          </More>
        </Palette>

        <SheetPanel>
          <TabStrip role="tablist">
            <Tab role="tab" aria-selected="true" $active $w={54}>Sheets</Tab>
            <Tab role="tab" aria-selected="false" $w={68}>Inspector</Tab>
            <Tab role="tab" aria-selected="false" $w={96}>Selection Filter</Tab>
            <Tab role="tab" aria-selected="false" $w={102}>Design Manager</Tab>
          </TabStrip>
          <SheetCard>
            <SheetThumbnail />
            <SheetNumber>1</SheetNumber>
          </SheetCard>
        </SheetPanel>
        <Splitter />

        <Editor>
          <CommandRow>
            <Coordinates htmlFor="command">50 mil (8400 3300)</Coordinates>
            <CommandBox>
              <CommandInput id="command" type="text" />
              <Caret />
              <SelectArrow />
            </CommandBox>
          </CommandRow>
          <CanvasRow>
            <Canvas><Schematic /></Canvas>
            <VerticalTrack><VerticalThumb /></VerticalTrack>
          </CanvasRow>
          <HorizontalTrack><HorizontalThumb /></HorizontalTrack>
        </Editor>
      </Workspace>

      <StatusBar>
        <span>'C:\Users\caio\Documents\projeto\esquematico.sch' saved. Left-click to start net wire</span>
        <StatusFlash>
          <svg width="20" height="20" aria-hidden="true"><path d="M15 1L1 12h8l-2 7 12-9h-7z" fill="#cfcfcf" /></svg>
        </StatusFlash>
      </StatusBar>

      <Taskbar>
        <Apps>
          <AppButton type="button" aria-label="Start" $w={42} $after={8}><StartOrb /></AppButton>
          <AppButton type="button" aria-label="Internet Explorer" $w={64}><InternetExplorer /></AppButton>
          <AppButton type="button" aria-label="Explorer" $open $w={60}><Explorer /></AppButton>
          <AppButton type="button" aria-label="Media Player" $w={60} $after={4}><MediaPlayer /></AppButton>
          <AppButton type="button" aria-label="Chrome" $open $w={60}><Chrome /></AppButton>
          <AppButton type="button" aria-label="Firefox" $w={64}><Firefox /></AppButton>
          <AppButton type="button" aria-label="EAGLE" $open $stacked $w={55}><Eagle /></AppButton>
        </Apps>
        <Tray>
          <TrayItem $w={16}>PT</TrayItem>
          <TrayItem $w={26}>
            <svg width="16" height="14"><path d="M.500 5.500h14v8H.500z" fill="#c9c9c9" stroke="#eee" /><path d="M2 8h11M2 10h11M4 12h7" stroke="#555" strokeDasharray="1 1" /><path d="M4 5q0-3 4-3 4 1 5-1.500" fill="none" stroke="#bbb" /></svg>
          </TrayItem>
          <TrayItem><svg width="8" height="4"><path d="M0 4l4-4 4 4z" fill="#fff" /></svg></TrayItem>
          <TrayItem>
            <svg width="16" height="16"><path d="M1.500 1v14" stroke="#fff" strokeWidth="1.500" /><path d="M3 2h7v1h4v6H9V8H3z" fill="#fff" /><circle cx="10.500" cy="10.500" r="4.500" fill="#d82a2a" /><path d="M8.500 8.500l4 4M12.500 8.500l-4 4" stroke="#fff" strokeWidth="1.400" /></svg>
          </TrayItem>
          <TrayItem>
            <svg width="16" height="16"><path d="M2.500 2.500h6v11h-6z" fill="#111" stroke="#ddd" /><path d="M10 1v4M13 1v4" stroke="#fff" strokeWidth="1.500" /><path d="M8 5h7v3q-1 3-3 3v3h-1v-3q-3-1-3-3z" fill="#fff" /><path d="M1 7l8 8M9 7l-8 8" stroke="#e00" strokeWidth="2.200" /></svg>
          </TrayItem>
          <TrayItem>
            <svg width="16" height="12"><path d="M1 10h2v2H1zM4 9h2v3H4zM7 6h2v6H7zM10 3h2v9h-2zM13 0h2v12h-2z" fill="#fff" /></svg>
          </TrayItem>
          <TrayItem>
            <svg width="16" height="16"><path d="M1 5h3l5-4v13l-5-4H1z" fill="#fff" /><circle cx="11" cy="11" r="3.800" fill="#e04040" stroke="#d82a2a" /><path d="M8.500 8.500l5 5" stroke="#fff" strokeWidth="1.500" /></svg>
          </TrayItem>
          <Clock>01:17<br />23/12/2020</Clock>
          <ShowDesktop type="button" aria-label="Show desktop" />
        </Tray>
      </Taskbar>
    </Window>
  );
}

const ScriptTools = styled.div`
  display: flex;
  fill: #fff;

  text {
    fill: #fff;
  }
`;
